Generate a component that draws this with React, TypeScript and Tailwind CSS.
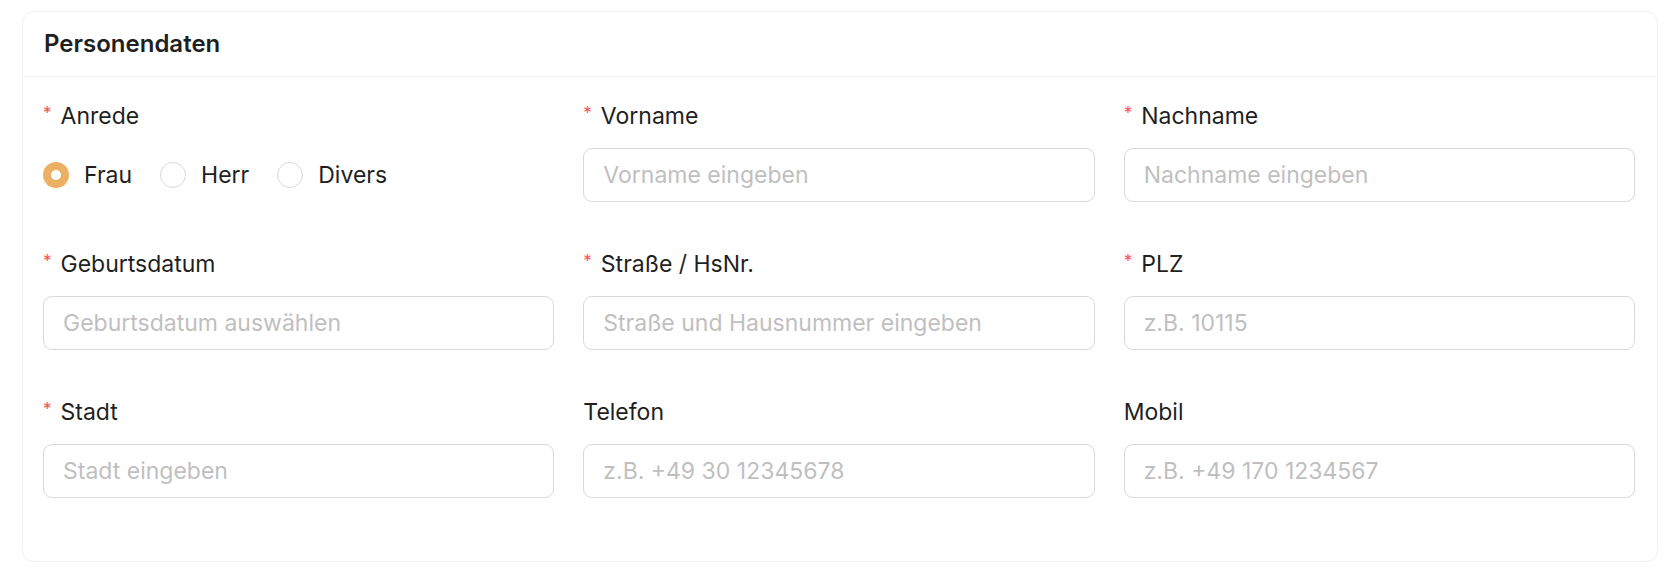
import React from "react";

type Field = {
  label: string;
  placeholder?: string;
  required?: boolean;
  radio?: boolean;
};

const fields: Field[] = [
  { label: "Anrede", required: true, radio: true },
  { label: "Vorname", placeholder: "Vorname eingeben", required: true },
  { label: "Nachname", placeholder: "Nachname eingeben", required: true },
  { label: "Geburtsdatum", placeholder: "Geburtsdatum auswählen", required: true },
  { label: "Straße / HsNr.", placeholder: "Straße und Hausnummer eingeben", required: true },
  { label: "PLZ", placeholder: "z.B. 10115", required: true },
  { label: "Stadt", placeholder: "Stadt eingeben", required: true },
  { label: "Telefon", placeholder: "z.B. +49 30 12345678" },
  { label: "Mobil", placeholder: "z.B. +49 170 1234567" },
];

const options = ["Frau", "Herr", "Divers"];

const App = () => {
  const [anrede, setAnrede] = React.useState("Frau");

  return (
    <div className="min-h-screen bg-white px-[22px] pt-[11px] font-['Inter','Noto_Sans',sans-serif] text-[#1f1f1f]">
      <div className="rounded-[12px] border border-[#f0f0f0] bg-white">
        {/* Header */}
        <div className="flex h-[65px] items-center border-b border-[#f0f0f0] px-[21px]">
          <h2 className="text-[24px] font-semibold leading-none">Personendaten</h2>
        </div>

        {/* Form grid */}
        <div className="grid grid-cols-3 gap-x-[29px] gap-y-[46px] pl-[20px] pr-[22px] pt-[23px] pb-[63px]">
          {fields.map((f) => (
            <div key={f.label} className="flex flex-col">
              <label className="mb-[15px] flex h-[33px] items-center text-[23px] leading-[33px]">
                {f.required && (
                  <span className="mr-[9px] -mt-[7px] text-[17px] leading-none text-[#ff4d4f]">*</span>
                )}
                {f.label}
              </label>

              {f.radio ? (
                <div className="flex h-[54px] items-center gap-[28px]">
                  {options.map((o) => {
                    const checked = anrede === o;
                    return (
                      <button
                        key={o}
                        type="button"
                        onClick={() => setAnrede(o)}
                        className="flex items-center gap-[15px] text-[23px]"
                      >
                        {checked ? (
                          <span className="flex h-[26px] w-[26px] items-center justify-center rounded-full bg-[#ebb063]">
                            <span className="h-[10px] w-[10px] rounded-full bg-white" />
                          </span>
                        ) : (
                          <span className="h-[26px] w-[26px] rounded-full border border-[#d9d9d9] bg-white" />
                        )}
                        {o}
                      </button>
                    );
                  })}
                </div>
              ) : (
                <input
                  type="text"
                  placeholder={f.placeholder}
                  className="h-[54px] w-full rounded-[9px] border border-[#d9d9d9] bg-white px-[19px] text-[23px] outline-none placeholder:text-[#bfbfbf]"
                />
              )}
            </div>
          ))}
        </div>
      </div>
    </div>
  );
};

export default App;
